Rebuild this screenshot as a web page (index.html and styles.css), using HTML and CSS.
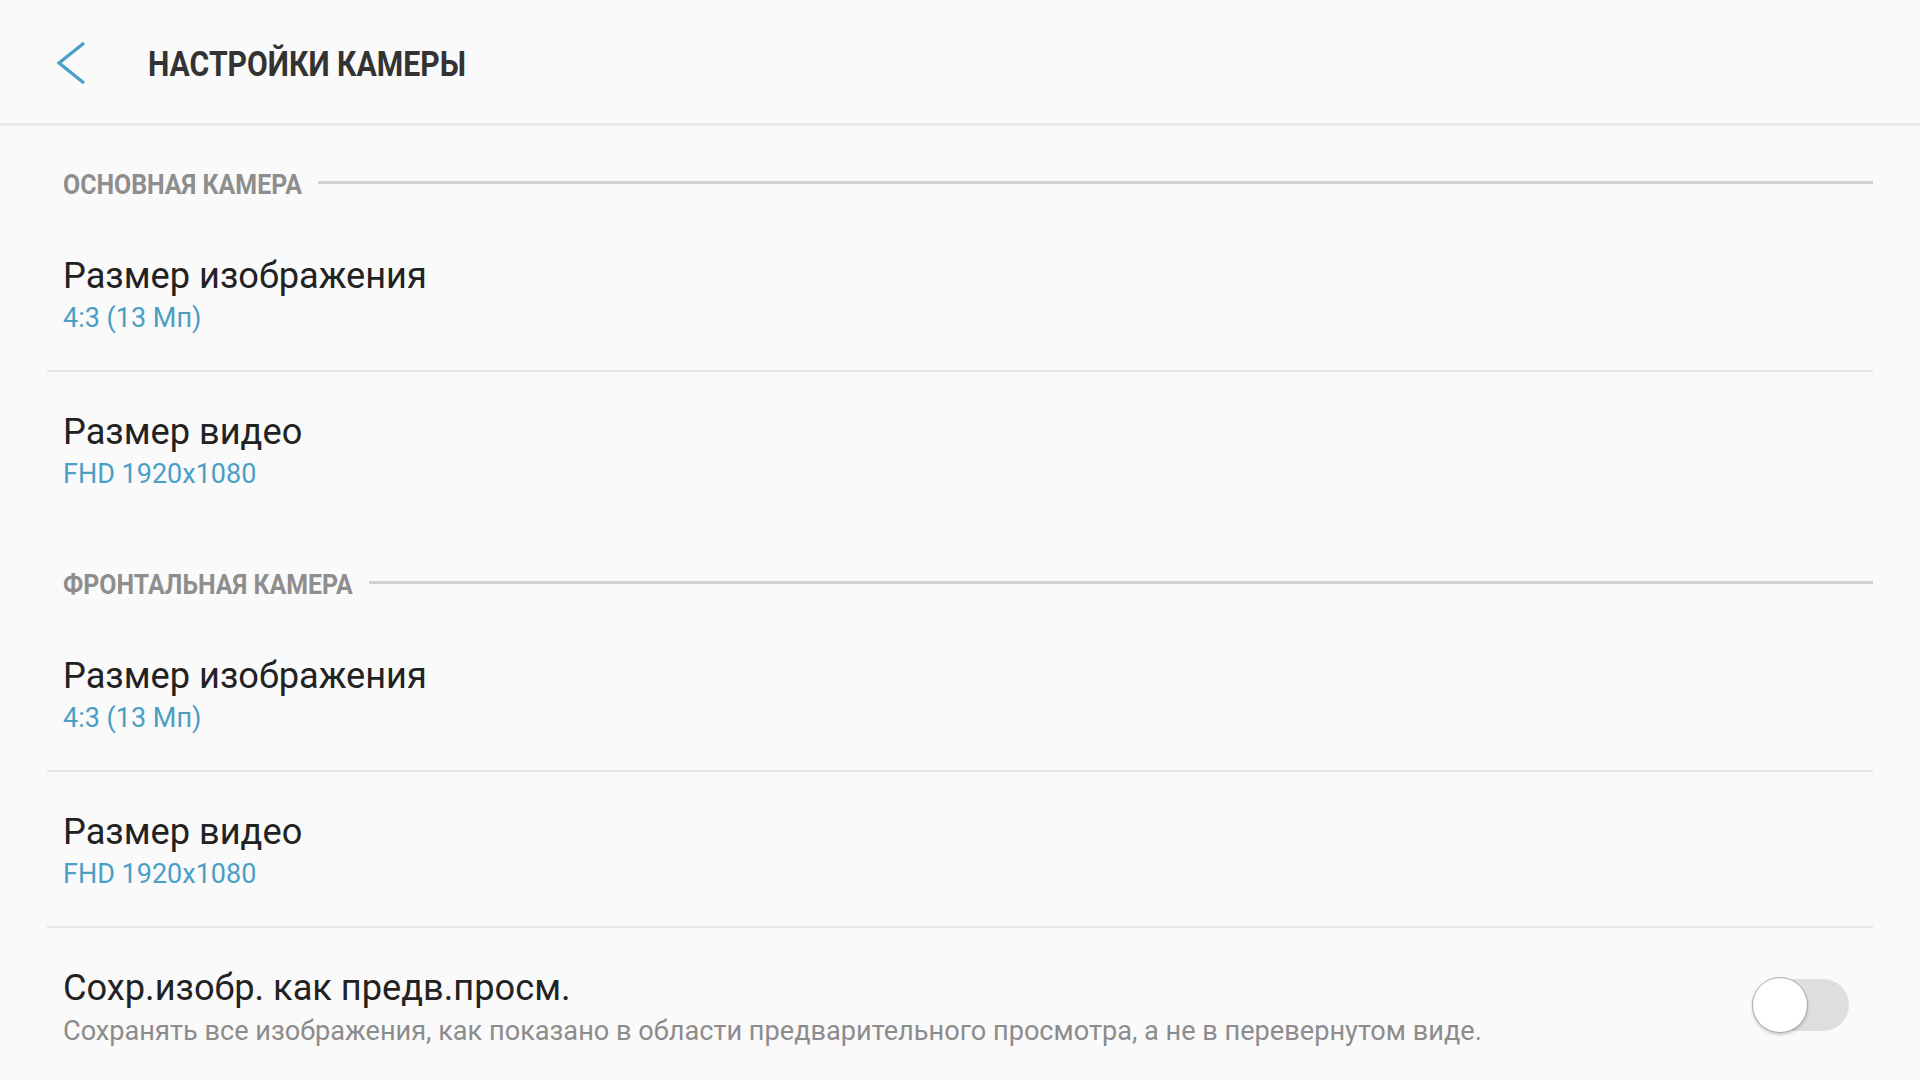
FILE: index.html
```html
<!DOCTYPE html>
<html lang="ru">
<head>
    <meta charset="UTF-8">
    <title>Настройки камеры</title>
    <link rel="stylesheet" href="styles.css">
</head>
<body>
    <header class="app-bar">
        <button class="back-btn" aria-label="Назад">
            <svg width="30" height="44" viewBox="0 0 30 44">
                <polyline points="27,2 2,22 27,42" fill="none" stroke="#4a9fc6" stroke-width="3.4"/>
            </svg>
        </button>
        <h1 class="app-title"><span class="cond">НАСТРОЙКИ КАМЕРЫ</span></h1>
    </header>

    <main class="settings">
        <section class="group">
            <div class="group-head">
                <span class="group-label cond main-cam">ОСНОВНАЯ КАМЕРА</span>
                <span class="group-rule"></span>
            </div>
            <div class="item">
                <div class="item-text">
                    <div class="item-title">Размер изображения</div>
                    <div class="item-value">4:3 (13 Мп)</div>
                </div>
            </div>
            <div class="item">
                <div class="item-text">
                    <div class="item-title">Размер видео</div>
                    <div class="item-value">FHD 1920x1080</div>
                </div>
            </div>
        </section>

        <section class="group">
            <div class="group-head">
                <span class="group-label cond front-cam">ФРОНТАЛЬНАЯ КАМЕРА</span>
                <span class="group-rule"></span>
            </div>
            <div class="item">
                <div class="item-text">
                    <div class="item-title">Размер изображения</div>
                    <div class="item-value">4:3 (13 Мп)</div>
                </div>
            </div>
            <div class="item">
                <div class="item-text">
                    <div class="item-title">Размер видео</div>
                    <div class="item-value">FHD 1920x1080</div>
                </div>
            </div>
            <div class="item">
                <div class="item-text">
                    <div class="item-title">Сохр.изобр. как предв.просм.</div>
                    <div class="item-desc">Сохранять все изображения, как показано в области предварительного просмотра, а не в перевернутом виде.</div>
                </div>
                <div class="switch">
                    <span class="switch-thumb"></span>
                </div>
            </div>
        </section>
    </main>
</body>
</html>
```

FILE: styles.css
```css
body {
    margin: 0;
    background: #fafafa;
    font-family: Roboto, "Noto Sans", sans-serif;
    color: #222;
    overflow: hidden;
}
.app-bar {
    height: 123px;
    border-bottom: 3px solid #e8e8e8;
    display: flex;
    align-items: center;
}
.back-btn {
    background: none;
    border: none;
    padding: 0;
    margin: 3px 0 0 57px;
    width: 30px;
    height: 44px;
    cursor: pointer;
}
.back-btn svg {
    display: block;
}
.app-title {
    margin: 6px 0 0 61px;
    font-size: 35px;
    font-weight: 700;
    color: #333;
    white-space: nowrap;
}
/* узкое начертание: сжимаем Roboto по горизонтали */
.cond {
    display: inline-block;
    font-weight: 700;
    transform-origin: left center;
}
.app-title .cond {
    transform: scaleX(0.862);
}
.settings {
    margin: 0 47px;
}
.group-head {
    box-sizing: border-box;
    height: 90px;
    padding: 26px 0 0 16px;
    display: flex;
    align-items: center;
}
.group-label {
    font-size: 28px;
    color: #8e8e8e;
    white-space: nowrap;
    transform: scaleX(0.889);
}
.main-cam {
    margin-right: -30px;
}
.front-cam {
    margin-right: -36px;
}
.group-rule {
    flex: 1;
    height: 3px;
    margin: -4px 0 0 16px;
    background: #d0d0d0;
}
.item {
    height: 154px;
    padding: 0 24px 0 16px;
    display: flex;
    justify-content: space-between;
}
.item + .item {
    border-top: 2px solid #e6e6e6;
}
.item-text {
    padding-top: 38px;
}
.item-title {
    font-size: 36.2px;
    line-height: 44px;
    color: #222;
}
.item-value {
    margin-top: 3px;
    font-size: 27px;
    line-height: 34px;
    color: #4a9fc6;
}
.item-desc {
    margin-top: 4px;
    font-size: 27.15px;
    line-height: 34px;
    color: #8c8c8c;
}
.switch {
    position: relative;
    align-self: center;
    width: 96px;
    height: 52px;
    border-radius: 26px;
    background: #dedede;
}
.switch-thumb {
    position: absolute;
    left: -1px;
    top: -2px;
    box-sizing: border-box;
    width: 56px;
    height: 56px;
    border-radius: 50%;
    background: #fff;
    border: 1.5px solid #a9a9a9;
    box-shadow: 0 2px 3px rgba(0, 0, 0, 0.18);
}
```
